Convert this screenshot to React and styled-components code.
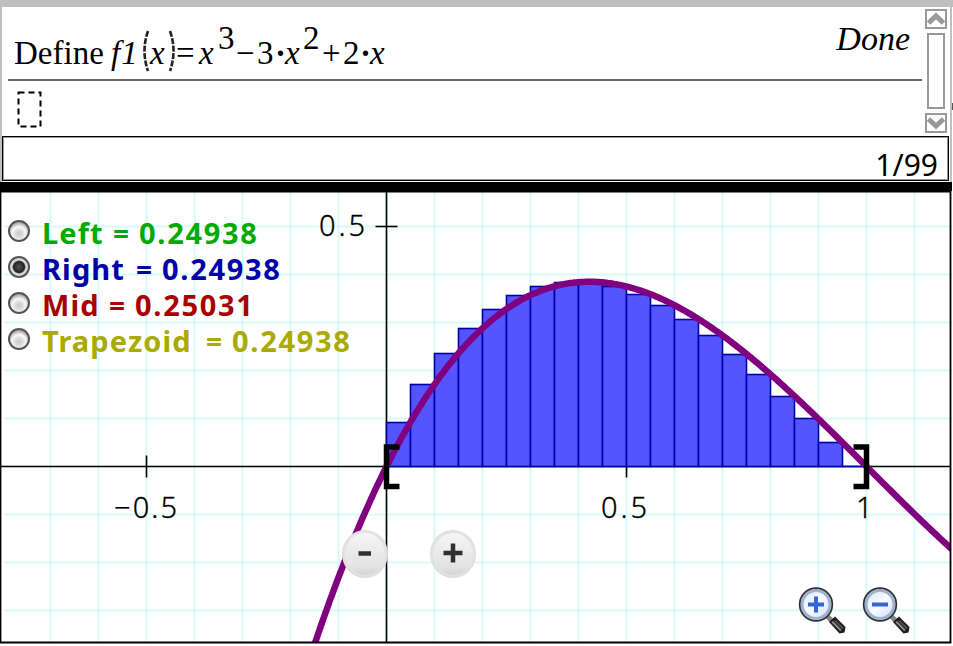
import React, { useState } from 'react';
import styled, { createGlobalStyle } from 'styled-components';

// graph window, in pixels relative to the plot's top left corner
const WIDTH = 953;
const HEIGHT = 455;
const ORIGIN_X = 386.5;
const ORIGIN_Y = 275.5;
const SCALE = 480;
const STRIPS = 20;

const f1 = (x) => x ** 3 - 3 * x ** 2 + 2 * x;
const toX = (x) => ORIGIN_X + x * SCALE;
const toY = (y) => ORIGIN_Y - y * SCALE;

const SUMS = [
  { id: 'left', label: 'Left', value: '0.24938', color: '#00aa00', width: '71px' },
  { id: 'right', label: 'Right', value: '0.24938', color: '#0000aa', width: '94px' },
  { id: 'mid', label: 'Mid', value: '0.25031', color: '#aa0000', width: '67px' },
  { id: 'trapezoid', label: 'Trapezoid', value: '0.24938', color: '#aaaa00', width: '164px' },
];

function Formula() {
  return (
    <FormulaLine>
      <Word $width="97px">Define</Word>
      <Italic $width="31px">f1</Italic>
      <Paren viewBox="0 0 8 44">
        <path d="M6 2 Q-1 22 6 42" />
      </Paren>
      <Italic $width="18px">x</Italic>
      <Paren viewBox="0 0 8 44">
        <path d="M2 2 Q9 22 2 42" />
      </Paren>
      <Word $width="23px">=</Word>
      <Italic $width="19px">x</Italic>
      <Power $width="18px">3</Power>
      <Word $width="21px">−</Word>
      <Word $width="18px">3</Word>
      <Dot $width="10px">·</Dot>
      <Italic $width="18px">x</Italic>
      <Power $width="19px">2</Power>
      <Word $width="21px">+</Word>
      <Word $width="17px">2</Word>
      <Dot $width="10px">·</Dot>
      <Italic $width="17px">x</Italic>
    </FormulaLine>
  );
}

function Plot() {
  const columns = [];
  for (let x = ORIGIN_X - 48 * 7; x < 950; x += 48) columns.push(x);
  const rows = [];
  for (let y = ORIGIN_Y - 48 * 5; y < 450; y += 48) rows.push(y);

  const strips = [];
  for (let i = 0; i < STRIPS; i++) {
    strips.push(f1((i + 1) / STRIPS));
  }

  const points = [];
  for (let px = 310; px <= 954; px += 2) {
    points.push(`${px},${toY(f1((px - ORIGIN_X) / SCALE)).toFixed(1)}`);
  }

  return (
    <PlotSvg viewBox={`0 0 ${WIDTH} ${HEIGHT}`}>
      <defs>
        <clipPath id="window">
          <rect x="1" y="1" width="949" height="450" />
        </clipPath>
      </defs>
      <g stroke="#d7fbfb" strokeWidth="2">
        {columns.map((x) => <line key={x} x1={x} x2={x} y1="1" y2="451" />)}
        {rows.map((y) => <line key={y} x1="4" x2="950" y1={y} y2={y} />)}
      </g>
      <g stroke="#000" strokeWidth="1.6">
        <line x1="1" x2="950" y1={ORIGIN_Y} y2={ORIGIN_Y} />
        <line x1={ORIGIN_X} x2={ORIGIN_X} y1="1" y2="451" />
        <line x1={toX(-0.5)} x2={toX(-0.5)} y1="264.5" y2="286.5" />
        <line x1={toX(0.5)} x2={toX(0.5)} y1="264.5" y2="286.5" />
        <line x1="375.5" x2="397.5" y1={toY(0.5)} y2={toY(0.5)} />
      </g>
      <g fill="#5555ff" stroke="#0000aa" strokeWidth="1.6">
        {strips.map((h, i) => (
          <rect
            key={i}
            x={ORIGIN_X + i * 24}
            y={Math.floor(toY(h)) + 0.5}
            width="24"
            height={ORIGIN_Y - Math.floor(toY(h)) - 0.5}
          />
        ))}
        <line x1={toX(0.95)} x2={toX(1)} y1={ORIGIN_Y} y2={ORIGIN_Y} />
      </g>
      <polyline
        points={points.join(' ')}
        fill="none"
        stroke="#800080"
        strokeWidth="6.5"
        clipPath="url(#window)"
      />
      <g fill="none" stroke="#000" strokeWidth="5.5">
        <path d="M399.5 256 H386.5 V295.5 H399.5" />
        <path d="M853.5 256 H866.5 V295.5 H853.5" />
      </g>
      <AxisText x="319" y="45" textLength="46">0.5</AxisText>
      <AxisText x="114" y="327" textLength="63">−0.5</AxisText>
      <AxisText x="601" y="327" textLength="46">0.5</AxisText>
      <AxisText x="856" y="327">1</AxisText>
      <path d="M0.5 0.5 H950.5 V451.5 H0.5 Z" fill="none" stroke="#000" strokeWidth="1.8" />
    </PlotSvg>
  );
}

function Magnifier({ minus }) {
  const id = minus ? 'lensOut' : 'lensIn';
  return (
    <svg width="48" height="49" viewBox="0 0 48 49">
      <defs>
        <linearGradient id={id} x1="0" y1="0" x2="1" y2="1">
          <stop offset="0" stopColor="#d5e2ff" />
          <stop offset="0.5" stopColor="#f8fbff" />
          <stop offset="1" stopColor="#c5d8fb" />
        </linearGradient>
      </defs>
      <path d="M29 30 L34 35" stroke="#888" strokeWidth="5" />
      <path d="M31 36 L37 30.5 L47.5 41 L46.5 46.5 L41.5 47.5 Z" fill="#1c1c1c" />
      <path d="M34 35.5 L43 44.5" stroke="#8a8a8a" strokeWidth="2" />
      <path d="M37 34.5 L45 42.5" stroke="#4a4a4a" strokeWidth="2" />
      <circle cx="18" cy="18.5" r="16.2" fill={`url(#${id})`} stroke="#2e333b" strokeWidth="2" />
      <circle cx="18" cy="18.5" r="14" fill="none" stroke="#9fb0c8" strokeWidth="3" />
      <path d="M10 18.5 H26" stroke="#3565d8" strokeWidth="4" />
      {!minus && <path d="M18 10.5 V26.5" stroke="#3565d8" strokeWidth="4" />}
    </svg>
  );
}

function Scrollbar() {
  return (
    <ScrollColumn>
      <ScrollButton>
        <svg width="18" height="16" viewBox="0 0 18 16">
          <path d="M1.5 12 L9 5 L16.5 12" />
        </svg>
      </ScrollButton>
      <Thumb />
      <ScrollButton>
        <svg width="18" height="16" viewBox="0 0 18 16">
          <path d="M1.5 4 L9 11 L16.5 4" />
        </svg>
      </ScrollButton>
    </ScrollColumn>
  );
}

function App() {
  const [method, setMethod] = useState('right');

  return (
    <>
      <GlobalStyle />
      <Screen>
        <Calculator>
          <History>
            <Entries>
              <Entry>
                <Formula />
                <Answer>Done</Answer>
              </Entry>
              <Cursor viewBox="0 0 26 38">
                <rect x="1.5" y="1.5" width="22" height="34" />
              </Cursor>
            </Entries>
            <Scrollbar />
          </History>
          <Status>1/99</Status>
        </Calculator>
        <EdgeMark />
        <Divider />
        <Graph>
          <Plot />
          <Legend>
            {SUMS.map(({ id, label, value, color, width }) => (
              <Sum key={id} onClick={() => setMethod(id)}>
                <Radio $on={method === id} />
                <SumText $color={color}>
                  <SumName $width={width}>{label}</SumName>
                  <Equals>=</Equals>
                  <SumValue>{value}</SumValue>
                </SumText>
              </Sum>
            ))}
          </Legend>
          <StepButtons>
            <StepButton>
              <svg width="20" height="20" viewBox="0 0 20 20"><path d="M3.5 10.5 H16" /></svg>
            </StepButton>
            <StepButton>
              <svg width="20" height="20" viewBox="0 0 20 20"><path d="M0.5 10 H19.5 M10 0.5 V19.5" /></svg>
            </StepButton>
          </StepButtons>
          <ZoomButtons>
            <Magnifier />
            <Magnifier minus />
          </ZoomButtons>
        </Graph>
      </Screen>
    </>
  );
}
export default App;

const GlobalStyle = createGlobalStyle`
  body {
    margin: 0;
    background: #ffffff;
    overflow: hidden;
  }
`;

const Screen = styled.div`
  position: relative;
  width: 953px;
  height: 646px;
  box-sizing: border-box;
  display: flex;
  flex-direction: column;
  border-top: 7px solid #c0c0c0;
  background: #ffffff;
`;

const Calculator = styled.div`
  height: 175px;
  margin-right: 1px;
  box-sizing: border-box;
  display: flex;
  flex-direction: column;
  border: solid #c0c0c0;
  border-width: 0 2px 0 2px;
`;

const History = styled.div`
  height: 129px;
  display: flex;
  justify-content: space-between;
`;

const Entries = styled.div`
  width: 914px;
  margin-left: 6px;
`;

const Entry = styled.div`
  height: 72px;
  display: flex;
  justify-content: space-between;
  border-bottom: 2px solid #666666;
`;

const FormulaLine = styled.div`
  display: flex;
  align-items: flex-start;
  padding: 27px 0 0 6px;
  font-family: 'Liberation Serif', serif;
  font-size: 33px;
  line-height: 38px;
  color: #000000;
`;

const Word = styled.span`
  width: ${({ $width }) => $width};
  white-space: nowrap;
`;

const Italic = styled(Word)`
  font-style: italic;
  letter-spacing: 1px;
`;

const Power = styled(Word)`
  margin-top: -15px;
`;

const Dot = styled(Word)`
  font-weight: 700;
`;

const Paren = styled.svg`
  width: 8px;
  height: 44px;
  margin-top: -5px;
  fill: none;
  stroke: #222222;
  stroke-width: 2.6;
  stroke-dasharray: 6 1.5;
`;

const Answer = styled.span`
  padding: 13px 12px 0 0;
  font-family: 'Liberation Serif', serif;
  font-size: 34px;
  font-style: italic;
  line-height: 38px;
`;

const Cursor = styled.svg`
  display: block;
  width: 26px;
  height: 38px;
  margin: 10px 0 0 9px;
  fill: none;
  stroke: #000000;
  stroke-width: 2;
  stroke-dasharray: 6 4;
`;

const ScrollColumn = styled.div`
  width: 22px;
  margin: 2px 3px 0 0;
  display: flex;
  flex-direction: column;
  align-items: center;
  gap: 4px;
`;

const ScrollButton = styled.div`
  width: 22px;
  height: 20px;
  box-sizing: border-box;
  display: flex;
  align-items: center;
  justify-content: center;
  border: 2px solid #999999;

  path {
    fill: none;
    stroke: #999999;
    stroke-width: 5;
  }
`;

const Thumb = styled.div`
  width: 18px;
  height: 76px;
  box-sizing: border-box;
  border: 2px solid #999999;
`;

const Status = styled.div`
  height: 45px;
  margin-right: 1px;
  box-sizing: border-box;
  padding: 9px 10px 0 0;
  border: 1px solid #000000;
  box-shadow: inset 0 0 0 1px #999999;
  text-align: right;
  font-family: 'Noto Sans', sans-serif;
  font-size: 30px;
  font-weight: 400;
  line-height: 38px;
`;

const EdgeMark = styled.span`
  position: absolute;
  right: 0;
  top: 96px;
  width: 1px;
  height: 7px;
  background: #555555;
`;

const Divider = styled.div`
  height: 9px;
  margin-right: 1px;
  background: #000000;
`;

const Graph = styled.div`
  position: relative;
  height: 455px;
`;

const PlotSvg = styled.svg`
  display: block;
  width: 953px;
  height: 455px;
`;

const AxisText = styled.text`
  font-family: 'Noto Sans', sans-serif;
  font-size: 29px;
  font-weight: 300;
  fill: #000000;
  stroke: #000000;
  stroke-width: 0.3;
`;

const Legend = styled.div`
  position: absolute;
  left: 8px;
  top: 23px;
`;

const Sum = styled.div`
  height: 36px;
  display: flex;
  align-items: flex-start;
  gap: 12px;
`;

const Radio = styled.span`
  width: 22px;
  height: 22px;
  margin-top: 6px;
  box-sizing: border-box;
  border: 2px solid #555555;
  border-radius: 50%;
  background: ${({ $on }) =>
    $on
      ? 'radial-gradient(circle, #555 0, #222 5.5px, #ddd 7px, #ccc 10px)'
      : 'radial-gradient(circle at 50% 65%, #c8c8c8 0, #dedede 4px, #f8f8f8 7px, #aaa 11px)'};
`;

const SumText = styled.div`
  display: flex;
  font-family: 'Noto Sans', sans-serif;
  font-size: 29px;
  font-weight: 700;
  line-height: 38px;
  white-space: nowrap;
  color: ${({ $color }) => $color};
`;

const SumName = styled.span`
  width: ${({ $width }) => $width};
  letter-spacing: 1.1px;
`;

const Equals = styled.span`
  width: 26px;
  font-size: 28px;
`;

const SumValue = styled.span`
  letter-spacing: 1.7px;
`;

const StepButtons = styled.div`
  position: absolute;
  left: 342px;
  top: 339px;
  display: flex;
  gap: 42px;
`;

const StepButton = styled.button`
  width: 46px;
  height: 48px;
  display: flex;
  align-items: center;
  justify-content: center;
  padding: 0 0 2px;
  border: 1px solid #dcdcdc;
  border-radius: 50%;
  background: linear-gradient(#f6f6f6, #e4e4e4 75%, #d0d0d0);
  box-shadow: inset 0 0 0 2px #e2e2e2;

  path {
    fill: none;
    stroke: #303030;
    stroke-width: 4.5;
  }
`;

const ZoomButtons = styled.div`
  position: absolute;
  left: 798px;
  top: 395px;
  display: flex;
  gap: 16px;
`;
